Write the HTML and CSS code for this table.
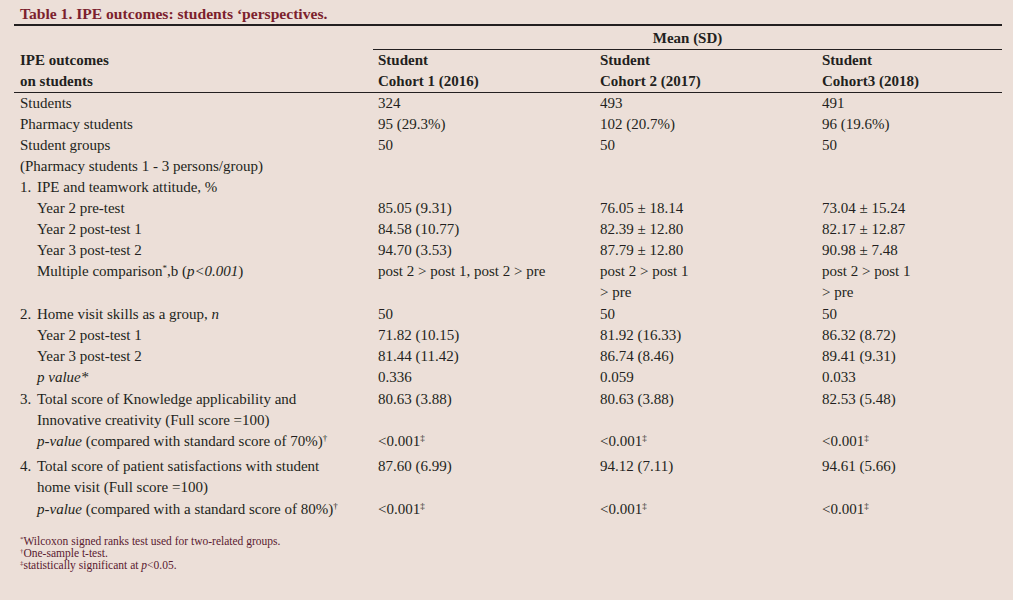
FILE: index.html
```html
<!DOCTYPE html>
<html lang="en">
<head>
<meta charset="utf-8">
<title>Table 1. IPE outcomes</title>
<link rel="stylesheet" href="styles.css">
</head>
<body>
<div class="page">
  <h1 class="title">Table 1. IPE outcomes: students ‘perspectives.</h1>
  <table class="data">
    <colgroup>
      <col class="c0"><col class="c1"><col class="c2"><col class="c3">
    </colgroup>
    <thead>
      <tr class="h1">
        <th class="blank"></th>
        <th colspan="3" class="mean">Mean (SD)</th>
      </tr>
      <tr class="h2">
        <th>IPE outcomes<br>on students</th>
        <th>Student<br>Cohort 1 (2016)</th>
        <th>Student<br>Cohort 2 (2017)</th>
        <th>Student<br>Cohort3 (2018)</th>
      </tr>
    </thead>
    <tbody>
      <tr><td>Students</td><td>324</td><td>493</td><td>491</td></tr>
      <tr><td>Pharmacy students</td><td>95 (29.3%)</td><td>102 (20.7%)</td><td>96 (19.6%)</td></tr>
      <tr><td>Student groups</td><td>50</td><td>50</td><td>50</td></tr>
      <tr><td>(Pharmacy students 1 - 3 persons/group)</td><td></td><td></td><td></td></tr>
      <tr><td><span class="num">1.</span>IPE and teamwork attitude, %</td><td></td><td></td><td></td></tr>
      <tr><td class="sub">Year 2 pre-test</td><td>85.05 (9.31)</td><td>76.05 ± 18.14</td><td>73.04 ± 15.24</td></tr>
      <tr><td class="sub">Year 2 post-test 1</td><td>84.58 (10.77)</td><td>82.39 ± 12.80</td><td>82.17 ± 12.87</td></tr>
      <tr><td class="sub">Year 3 post-test 2</td><td>94.70 (3.53)</td><td>87.79 ± 12.80</td><td>90.98 ± 7.48</td></tr>
      <tr><td class="sub">Multiple comparison<sup>*</sup>,b (<i>p&lt;0.001</i>)</td><td>post 2 &gt; post 1, post 2 &gt; pre</td><td>post 2 &gt; post 1<br>&gt; pre</td><td>post 2 &gt; post 1<br>&gt; pre</td></tr>
      <tr class="gap-s"><td><span class="num">2.</span>Home visit skills as a group, <i>n</i></td><td>50</td><td>50</td><td>50</td></tr>
      <tr><td class="sub">Year 2 post-test 1</td><td>71.82 (10.15)</td><td>81.92 (16.33)</td><td>86.32 (8.72)</td></tr>
      <tr><td class="sub">Year 3 post-test 2</td><td>81.44 (11.42)</td><td>86.74 (8.46)</td><td>89.41 (9.31)</td></tr>
      <tr><td class="sub"><i>p value*</i></td><td>0.336</td><td>0.059</td><td>0.033</td></tr>
      <tr class="gap-s"><td><div class="item"><span class="num">3.</span><span>Total score of Knowledge applicability and<br>Innovative creativity (Full score =100)</span></div></td><td>80.63 (3.88)</td><td>80.63 (3.88)</td><td>82.53 (5.48)</td></tr>
      <tr><td class="sub"><i>p-value</i> (compared with standard score of 70%)<sup>†</sup></td><td>&lt;0.001<sup>‡</sup></td><td>&lt;0.001<sup>‡</sup></td><td>&lt;0.001<sup>‡</sup></td></tr>
      <tr class="gap-l"><td><div class="item"><span class="num">4.</span><span>Total score of patient satisfactions with student<br>home visit (Full score =100)</span></div></td><td>87.60 (6.99)</td><td>94.12 (7.11)</td><td>94.61 (5.66)</td></tr>
      <tr class="gap-s"><td class="sub"><i>p-value</i> (compared with a standard score of 80%)<sup>†</sup></td><td>&lt;0.001<sup>‡</sup></td><td>&lt;0.001<sup>‡</sup></td><td>&lt;0.001<sup>‡</sup></td></tr>
    </tbody>
  </table>
  <div class="notes">
    <p><sup>*</sup>Wilcoxon signed ranks test used for two-related groups.</p>
    <p><sup>†</sup>One-sample t-test.</p>
    <p><sup>‡</sup>statistically significant at <i>p</i>&lt;0.05.</p>
  </div>
</div>
</body>
</html>
```

FILE: styles.css
```css
html, body {
  margin: 0;
  padding: 0;
  background: #ecdfd8;
}
body {
  width: 1013px;
  height: 600px;
  overflow: hidden;
  font-family: "Liberation Serif", "Times New Roman", serif;
  color: #231f20;
}
.page {
  padding: 4px 11px 0 14px;
}
.title {
  margin: 0;
  padding: 0 0 0 6px;
  font-size: 15.6px;
  line-height: 20px;
  font-weight: bold;
  color: #7c1f2e;
  border-bottom: 2px solid #231f20;
}
.data {
  width: 988px;
  border-collapse: collapse;
  table-layout: fixed;
  font-size: 15px;
  line-height: 21px;
}
.c0 { width: 359px; }
.c1 { width: 222px; }
.c2 { width: 222px; }
.c3 { width: 185px; }
.data th, .data td {
  padding: 0 0 0 5px;
  text-align: left;
  vertical-align: top;
}
.data th:first-child, .data td:first-child {
  padding-left: 6px;
}
.data th {
  font-weight: bold;
}
.h1 th {
  padding-top: 2px;
  padding-bottom: 1px;
  line-height: 20px;
}
.h1 .mean {
  text-align: center;
  border-bottom: 1px solid #231f20;
  padding-left: 0;
}
.h2 th {
  padding-top: 0;
  padding-bottom: 0;
  border-bottom: 1px solid #231f20;
}
.data tbody tr:first-child td {
  padding-top: 0;
}
.data td.sub {
  padding-left: 23px;
}
.num {
  display: inline-block;
  width: 17px;
}
.item {
  display: flex;
}
.item .num {
  flex: none;
}
.gap-s td { padding-top: 1px; }
.gap-l td { padding-top: 4px; }
sup {
  font-size: 0.6em;
  line-height: 0;
  vertical-align: 0.55em;
}
.notes {
  margin-top: 15px;
  padding-left: 6px;
  font-size: 11.5px;
  line-height: 12px;
  color: #5a2030;
}
.notes p {
  margin: 0;
}
```
